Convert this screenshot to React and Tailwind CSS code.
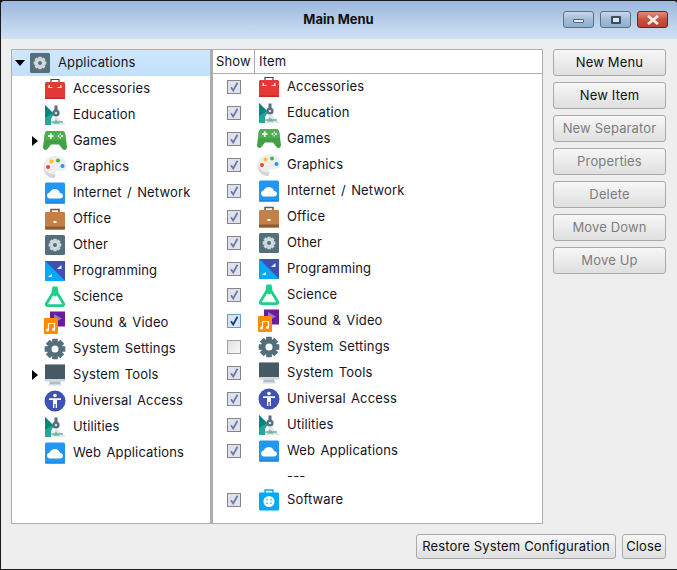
import React from "react";

const Gear = ({ cx = 12, cy = 12, r = 7, fill = "#546e7a", hole = "#546e7a", holeScale = 0.45 }) => {
  const teeth = [0, 45, 90, 135, 180, 225, 270, 315];
  const t = r * 0.36;
  return (
    <g>
      {teeth.map((a) => (
        <rect key={a} x={cx - t} y={cy - r * 1.32} width={t * 2} height={r * 0.7} rx={0.4} fill={fill} transform={`rotate(${a} ${cx} ${cy})`} />
      ))}
      <circle cx={cx} cy={cy} r={r} fill={fill} />
      <circle cx={cx} cy={cy} r={r * holeScale} fill={hole} />
    </g>
  );
};

const Ed = () => (
  <>
    <path d="M2 2L11 11L8 16L8 22H2Z" fill="#26a69a" />
    <path d="M2 2L10 10L2 15Z" fill="#00897b" />
    <path d="M8 22L12 14L14 14L23 22Z" fill="#dfe8e6" />
    <path d="M10 21L13 16L17 21Z" fill="#aebfbb" />
    <path d="M8 19H20" stroke="#26a69a" strokeWidth="1" />
    <rect x="11.500" y="2.500" width="3" height="5" fill="#546e7a" />
    <circle cx="13" cy="10" r="3.600" fill="#546e7a" />
    <circle cx="13" cy="10" r="1.300" fill="#cfd8dc" />
  </>
);

const icons = {
  accessories: (
    <>
      <path d="M8 6V2.500H16V6" fill="none" stroke="#37474f" strokeWidth="1.200" />
      <rect x="2" y="5" width="20" height="17" rx="1.500" fill="#e53935" />
      <rect x="2" y="20.500" width="20" height="1.500" fill="#c62828" />
      <rect x="5.500" y="8" width="1.500" height="3" fill="#fff" opacity=".9" />
      <rect x="5.500" y="10" width="4" height="1" fill="#fff" opacity=".8" />
      <rect x="17" y="8" width="1.500" height="3" fill="#fff" opacity=".9" />
      <rect x="14.500" y="10" width="4" height="1" fill="#fff" opacity=".8" />
    </>
  ),
  education: <Ed />,
  games: (
    <>
      <path d="M5 2H19C21 2 22 3 22.500 7L24 18C24 21 21 22 19.500 20L16 15.500H8L4.500 20C3 22 0 21 0 18L1.500 7C2 3 3 2 5 2Z" fill="#43a047" />
      <path d="M5 2H19C21 2 22 3 22.400 6.500L23 11H1L1.600 6.500C2 3 3 2 5 2Z" fill="#4caf50" />
      <rect x="5" y="6.200" width="5.500" height="1.700" fill="#fff" />
      <rect x="6.900" y="4.300" width="1.700" height="5.500" fill="#fff" />
      <circle cx="15.500" cy="7" r="1" fill="#fff" />
      <circle cx="19" cy="7" r="1" fill="#fff" />
      <circle cx="17.200" cy="5.300" r=".8" fill="#fff" />
      <circle cx="17.200" cy="8.700" r=".8" fill="#fff" />
    </>
  ),
  graphics: (
    <>
      <path d="M12 1C5 1 0.500 6 0.500 12C0.500 18 5 23 10 23C12.500 23 12.500 20.500 12 19C11.500 17 13 16 15 16H18C21.500 16 23.500 13.500 23.500 10.500C23.500 5 18.500 1 12 1Z" fill="#eeeeee" />
      <path d="M0.500 12C0.500 18 5 23 10 23C12.500 23 12.500 20.500 12 19C7 20 3 17 0.500 12Z" fill="#d5d5d5" />
      <circle cx="8.500" cy="6.500" r="2" fill="#fbc02d" />
      <circle cx="15" cy="5.500" r="2" fill="#4caf50" />
      <circle cx="5" cy="12" r="2" fill="#f44336" />
      <circle cx="19.500" cy="11" r="2" fill="#2196f3" />
    </>
  ),
  network: (
    <>
      <rect x="2" y="1.500" width="20" height="21" rx="1.500" fill="#2196f3" />
      <rect x="2" y="21.500" width="20" height="1" fill="#1976d2" />
      <path d="M7 17.500C4.800 17.500 4 15.800 4 14.500C4 12.800 5.300 11.700 6.800 11.500C7.500 9.500 9.500 8 11.800 8C14.500 8 16.500 9.800 17 12C18.800 12.200 20 13.300 20 14.800C20 16.300 18.800 17.500 17 17.500Z" fill="#fff" />
    </>
  ),
  office: (
    <>
      <path d="M8 5V2.500H16V5" fill="none" stroke="#795548" strokeWidth="1.600" />
      <rect x="2" y="5" width="20" height="17.500" rx="1" fill="#c68045" />
      <rect x="2" y="19.500" width="20" height="3" fill="#8d5a37" />
      <rect x="10.500" y="14" width="3" height="2" fill="#fff" />
    </>
  ),
  other: (
    <>
      <rect x="2" y="2" width="20" height="20" rx="1.500" fill="#546e7a" />
      <Gear r={4.800} fill="#cfd8dc" hole="#546e7a" holeScale={0.4} />
    </>
  ),
  programming: (
    <>
      <rect x="2" y="2" width="20" height="20" fill="#2196f3" />
      <path d="M2 2H22V22Z" fill="#3f51b5" />
      <path d="M2 22L2 2L22 22Z" fill="#03a9f4" />
      <path d="M15 9L18.500 6V10H14Z" fill="#fff" opacity=".9" />
      <path d="M6 17L9 15V18H5Z" fill="#fff" opacity=".9" />
    </>
  ),
  science: (
    <>
      <path d="M12 4.500L20.500 18.500C21.200 19.800 20.500 20.700 19.300 20.700H4.700C3.500 20.700 2.800 19.800 3.500 18.500Z" fill="none" stroke="#1ccf8b" strokeWidth="2.800" strokeLinejoin="round" />
      <path d="M9.500 1.500H14.500L15.500 7H8.500Z" fill="#1ccf8b" />
      <circle cx="12" cy="9.500" r="2" fill="#1ccf8b" />
    </>
  ),
  sound: (
    <>
      <rect x="7" y="0.500" width="15" height="15" fill="#6a1b9a" />
      <path d="M11 3L19 7.500L11 12Z" fill="#9575cd" />
      <rect x="1" y="7" width="14" height="16" rx="1" fill="#fb8c00" />
      <path d="M5.500 12.500H11.500V18" fill="none" stroke="#fff" strokeWidth="1.200" />
      <path d="M5.500 12.500V18.500" fill="none" stroke="#fff" strokeWidth="1.200" />
      <circle cx="4.500" cy="19" r="1.500" fill="#fff" />
      <circle cx="10.500" cy="18.500" r="1.500" fill="#fff" />
    </>
  ),
  settings: <Gear r={7.800} fill="#546e7a" hole="#ffffff" />,
  tools: (
    <>
      <rect x="2" y="1.500" width="20" height="17" fill="#cfd8dc" />
      <rect x="2" y="1.500" width="20" height="14.500" fill="#455a64" />
      <rect x="6.500" y="18.500" width="11" height="3" fill="#b0bec5" />
      <rect x="5" y="21.500" width="14" height="1" fill="#cfd8dc" />
    </>
  ),
  access: (
    <>
      <circle cx="12" cy="12" r="10.500" fill="#3f51b5" />
      <circle cx="12" cy="6.500" r="1.800" fill="#fff" />
      <path d="M6 9.200H18V11H14V19H12.700V15H11.300V19H10V11H6Z" fill="#fff" />
    </>
  ),
  software: (
    <>
      <path d="M8 6V2H16V6" fill="none" stroke="#03a9f4" strokeWidth="1.400" />
      <rect x="2" y="4.500" width="20" height="18" rx="1" fill="#03a9f4" />
      <circle cx="12" cy="13.500" r="5.500" fill="#fff" />
      <circle cx="10" cy="11.800" r=".8" fill="#03a9f4" />
      <circle cx="14" cy="11.800" r=".8" fill="#03a9f4" />
      <circle cx="10" cy="15.200" r=".8" fill="#03a9f4" />
      <circle cx="14" cy="15.200" r=".8" fill="#03a9f4" />
    </>
  ),
};

const Icon = ({ name }) => (
  <svg viewBox="0 0 24 24" className="w-6 h-6 shrink-0 block">{icons[name]}</svg>
);

const tree = [
  ["Accessories", "accessories"],
  ["Education", "education"],
  ["Games", "games", true],
  ["Graphics", "graphics"],
  ["Internet / Network", "network"],
  ["Office", "office"],
  ["Other", "other"],
  ["Programming", "programming"],
  ["Science", "science"],
  ["Sound & Video", "sound"],
  ["System Settings", "settings"],
  ["System Tools", "tools", true],
  ["Universal Access", "access"],
  ["Utilities", "education"],
  ["Web Applications", "network"],
];

const Check = ({ state = "on" }) => {
  if (state === "off")
    return <span className="w-[14px] h-[14px] border border-[#a0a0a0] bg-gradient-to-br from-[#e0e0e0] to-[#fafafa] block" />;
  const active = state === "active";
  return (
    <span className={`w-[14px] h-[14px] border block ${active ? "border-[#6f9cc4] bg-[#d6e5f4]" : "border-[#858585] bg-[#dfe2ec]"}`}>
      <svg viewBox="0 0 12 12" className="w-3 h-3 block">
        <path d="M3 6.200L5.200 9.500L9.500 1.800" fill="none" stroke={active ? "#1a3a8c" : "#6a7ba8"} strokeWidth="1.800" />
      </svg>
    </span>
  );
};

const Row = ({ name, icon, check = "on" }) => (
  <div className="h-[26px] flex items-center">
    <div className="w-[42px] flex justify-center"><Check state={check} /></div>
    <div className="w-[2px]" />
    <Icon name={icon} />
    <span className="ml-[6px]">{name}</span>
  </div>
);

const Btn = ({ children, disabled, className = "" }) => (
  <button className={`rounded-[3px] border border-[#a9a9a9] bg-gradient-to-b from-[#f7f7f7] to-[#dfdfdf] flex items-center justify-center ${disabled ? "text-[#7d7d7d]" : "text-[#111]"} ${className}`}>
    {children}
  </button>
);

const WinBtn = ({ children, red }) => (
  <div className={`w-[31px] h-[17px] rounded-[3px] border flex items-center justify-center ${red ? "border-[#6d1f2e] bg-gradient-to-b from-[#e58a78] via-[#c9533f] to-[#b8402f]" : "border-[#5f6f80] bg-gradient-to-b from-[#c6d8ec] via-[#a3bcd8] to-[#8fb0d2]"}`}>
    {children}
  </div>
);

export default function App() {
  return (
    <div className="w-[677px] h-[570px] bg-[#1b1b1b] overflow-hidden font-['Inter',sans-serif] text-[13px] tracking-[0.15px] [word-spacing:1.5px] text-[#14141f]">
      <div className="h-[568px] ml-[1px] mt-[1px] rounded-t-[4px] overflow-hidden bg-[#eeeeee] flex flex-col">
        <div className="h-[38px] shrink-0 bg-gradient-to-b from-[#9cb8de] to-[#d0e1f4] relative flex items-center justify-center font-bold text-[#111] tracking-normal [word-spacing:0px]">
          <span className="mr-[1px]">Main Menu</span>
          <div className="absolute right-[9px] top-[10px] flex gap-[6px]">
            <WinBtn><span className="w-[11px] h-[4px] mt-[3px] bg-[#e9eef4] border border-[#55657a] rounded-[1px]" /></WinBtn>
            <WinBtn><span className="w-[10px] h-[8px] border-2 border-[#3d4d60] rounded-[1px] bg-[#dbe5f0]" /></WinBtn>
            <WinBtn red>
              <svg viewBox="0 0 14 10" className="w-[14px] h-[10px]"><path d="M2 1L12 9M12 1L2 9" stroke="#f4ece4" strokeWidth="2.800" /></svg>
            </WinBtn>
          </div>
        </div>

        <div className="flex-1 flex flex-col pl-[10px] pr-[10px] pt-[10px] pb-[10px] min-h-0">
          <div className="flex h-[475px]">
            <div className="w-[532px] flex border border-[#aeaeae] bg-white">
              <div className="w-[201px] shrink-0 border-r-[3px] border-[#aeaeae]">
                <div className="h-[26px] bg-gradient-to-b from-[#cfe7ff] to-[#c3e0fa] flex items-center">
                  <svg viewBox="0 0 10 6" className="w-[10px] h-[6px] ml-[3px]"><path d="M0 0H10L5 6Z" fill="#000" /></svg>
                  <span className="ml-[3px]"><Icon name="other" /></span>
                  <span className="ml-[6px]">Applications</span>
                </div>
                {tree.map(([n, ic, exp]) => (
                  <div key={n + ic} className="h-[26px] flex items-center pl-[18px]">
                    <span className="w-[10px] flex justify-center">
                      {exp && <svg viewBox="0 0 6 10" className="w-[6px] h-[10px]"><path d="M0 0L6 5L0 10Z" fill="#000" /></svg>}
                    </span>
                    <span className="ml-[3px]"><Icon name={ic} /></span>
                    <span className="ml-[6px]">{n}</span>
                  </div>
                ))}
              </div>
              <div className="flex-1 min-w-0">
                <div className="h-[24px] flex items-center border-b border-[#aeaeae]">
                  <div className="w-[42px] h-full border-r border-[#aeaeae] flex items-center pl-[3px]">Show</div>
                  <div className="pl-[4px]">Item</div>
                </div>
                <Row name="Accessories" icon="accessories" />
                <Row name="Education" icon="education" />
                <Row name="Games" icon="games" />
                <Row name="Graphics" icon="graphics" />
                <Row name="Internet / Network" icon="network" />
                <Row name="Office" icon="office" />
                <Row name="Other" icon="other" />
                <Row name="Programming" icon="programming" />
                <Row name="Science" icon="science" />
                <Row name="Sound & Video" icon="sound" check="active" />
                <Row name="System Settings" icon="settings" check="off" />
                <Row name="System Tools" icon="tools" />
                <Row name="Universal Access" icon="access" />
                <Row name="Utilities" icon="education" />
                <Row name="Web Applications" icon="network" />
                <div className="h-[23px] flex items-center pl-[74px] pt-[2px]">---</div>
                <Row name="Software" icon="software" />
              </div>
            </div>
            <div className="ml-[10px] w-[113px] flex flex-col gap-[6px]">
              <Btn className="h-[27px]">New Menu</Btn>
              <Btn className="h-[27px]">New Item</Btn>
              <Btn className="h-[27px]" disabled>New Separator</Btn>
              <Btn className="h-[27px]" disabled>Properties</Btn>
              <Btn className="h-[27px]" disabled>Delete</Btn>
              <Btn className="h-[27px]" disabled>Move Down</Btn>
              <Btn className="h-[27px]" disabled>Move Up</Btn>
            </div>
          </div>
          <div className="flex justify-end gap-[6px] mt-[10px] pr-[1px]">
            <Btn className="w-[200px] h-[25px]">Restore System Configuration</Btn>
            <Btn className="w-[44px] h-[25px]">Close</Btn>
          </div>
        </div>
      </div>
    </div>
  );
}
